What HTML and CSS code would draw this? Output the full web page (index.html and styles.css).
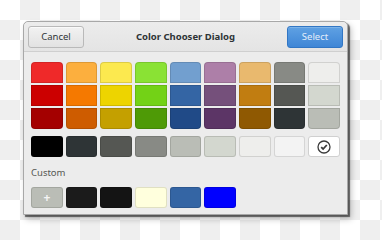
FILE: index.html
```html
<!DOCTYPE html>
<html lang="en">
<head>
    <meta charset="UTF-8">
    <title>Color Chooser Dialog</title>
    <link rel="stylesheet" href="styles.css">
</head>
<body>
    <div class="dialog">
        <div class="header">
            <button class="btn">Cancel</button>
            <span class="title">Color Chooser Dialog</span>
            <button class="btn btn-blue">Select</button>
        </div>
        <div class="content">
            <div class="palette">
                <div class="sw top" style="background:#ef2929"></div>
                <div class="sw top" style="background:#fcaf3e"></div>
                <div class="sw top" style="background:#fce94f"></div>
                <div class="sw top" style="background:#8ae234"></div>
                <div class="sw top" style="background:#729fcf"></div>
                <div class="sw top" style="background:#ad7fa8"></div>
                <div class="sw top" style="background:#e9b96e"></div>
                <div class="sw top" style="background:#888a85"></div>
                <div class="sw top" style="background:#eeeeec"></div>

                <div class="sw" style="background:#cc0000"></div>
                <div class="sw" style="background:#f57900"></div>
                <div class="sw" style="background:#edd400"></div>
                <div class="sw" style="background:#73d216"></div>
                <div class="sw" style="background:#3465a4"></div>
                <div class="sw" style="background:#75507b"></div>
                <div class="sw" style="background:#c17d11"></div>
                <div class="sw" style="background:#555753"></div>
                <div class="sw" style="background:#d3d7cf"></div>

                <div class="sw bottom" style="background:#a40000"></div>
                <div class="sw bottom" style="background:#ce5c00"></div>
                <div class="sw bottom" style="background:#c4a000"></div>
                <div class="sw bottom" style="background:#4e9a06"></div>
                <div class="sw bottom" style="background:#204a87"></div>
                <div class="sw bottom" style="background:#5c3566"></div>
                <div class="sw bottom" style="background:#8f5902"></div>
                <div class="sw bottom" style="background:#2e3436"></div>
                <div class="sw bottom" style="background:#babdb6"></div>
            </div>

            <div class="palette grays">
                <div class="sw round" style="background:#000000"></div>
                <div class="sw round" style="background:#2e3436"></div>
                <div class="sw round" style="background:#555753"></div>
                <div class="sw round" style="background:#888a85"></div>
                <div class="sw round" style="background:#babdb6"></div>
                <div class="sw round" style="background:#d3d7cf"></div>
                <div class="sw round" style="background:#eeeeec"></div>
                <div class="sw round" style="background:#f3f3f3"></div>
                <div class="sw round selected" style="background:#ffffff">
                    <svg width="14" height="14" viewBox="0 0 14 14">
                        <circle cx="7" cy="7" r="6" fill="none" stroke="#3a3a3a" stroke-width="1.3"/>
                        <path d="M4.2 7.2 L6.1 9 L9.8 5" fill="none" stroke="#3a3a3a" stroke-width="1.8"/>
                    </svg>
                </div>
            </div>

            <div class="label">Custom</div>

            <div class="palette custom">
                <div class="sw round add">+</div>
                <div class="sw round" style="background:#1b1b1b"></div>
                <div class="sw round" style="background:#141414"></div>
                <div class="sw round" style="background:#ffffdd"></div>
                <div class="sw round" style="background:#3465a4"></div>
                <div class="sw round" style="background:#0000ff"></div>
            </div>
        </div>
    </div>
</body>
</html>
```

FILE: styles.css
```css
html,body{margin:0;padding:0}
body{
    width:382px;
    height:240px;
    overflow:hidden;
    background:repeating-conic-gradient(#efefef 0 25%, #ffffff 0 50%) 0 0/40px 40px;
    font-family:"Noto Sans","DejaVu Sans",sans-serif;
    padding:21px 0 0 23px;
    box-sizing:border-box;
}

.dialog{
    width:325px;
    height:194px;
    box-sizing:border-box;
    background:#ececec;
    border:1px solid #a8a8a8;
    border-radius:5px 5px 0 0;
    box-shadow:2px 2px 1px rgba(0,0,0,0.55), 3px 4px 6px rgba(0,0,0,0.25);
}

.header{
    height:30px;
    box-sizing:border-box;
    display:flex;
    align-items:center;
    justify-content:space-between;
    padding:0 4px;
    background:linear-gradient(#ececec,#e4e4e4);
    border-bottom:1px solid #cfcfcf;
    border-radius:5px 5px 0 0;
}
.title{
    font-size:9.5px;
    font-weight:bold;
    color:#2e3436;
}
.btn{
    width:56px;
    height:22px;
    font-family:inherit;
    font-size:9.5px;
    color:#2e3436;
    background:linear-gradient(#f2f2f2,#e2e2e2);
    border:1px solid #b9b9b9;
    border-radius:3px;
    padding:0;
    box-shadow:inset 0 1px 0 #fafafa;
}
.btn-blue{
    color:#e4eefa;
    background:linear-gradient(#5fa1e3,#3f86d6);
    border-color:#3176c4;
    box-shadow:inset 0 1px 0 #7bb2e8;
}

.content{padding:10px 7px 0 7px}

.palette{
    display:grid;
    grid-template-columns:repeat(9,1fr);
    grid-auto-rows:21px;
    column-gap:3px;
    row-gap:2px;
}
.grays{margin-top:7px}
.custom{margin-top:7px}

.sw{
    box-sizing:border-box;
    border:1px solid rgba(0,0,0,0.12);
}
.top{border-radius:4px 4px 0 0}
.bottom{border-radius:0 0 4px 4px}
.round{border-radius:3px}
.selected{
    display:flex;
    align-items:center;
    justify-content:center;
    border-color:#d0d0d0;
}
.add{
    background:#babdb6;
    color:#f4f4f4;
    font-size:12px;
    font-weight:bold;
    display:flex;
    align-items:center;
    justify-content:center;
}

.label{
    font-size:9.5px;
    color:#555753;
    margin-top:9px;
    height:14px;
}
```
